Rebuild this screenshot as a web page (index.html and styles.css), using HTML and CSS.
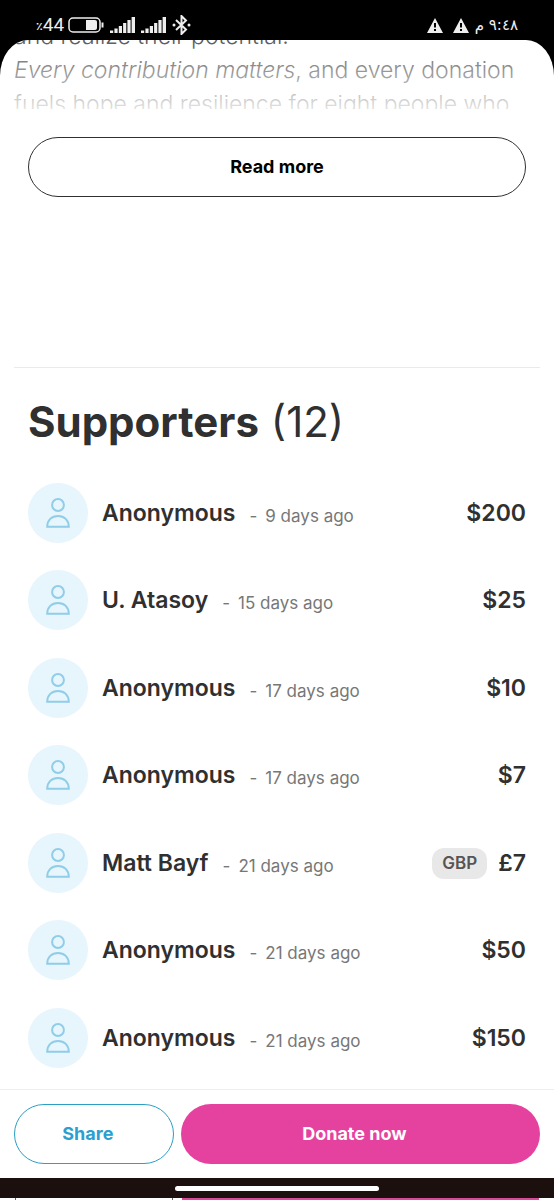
FILE: index.html
```html
<!DOCTYPE html>
<html lang="en">
<head>
<meta charset="utf-8">
<meta name="viewport" content="width=device-width, initial-scale=1">
<title>Supporters</title>
<link rel="stylesheet" href="styles.css">
</head>
<body>
<svg width="0" height="0" class="defs" aria-hidden="true">
  <symbol id="person" viewBox="0 0 24 30"><circle cx="12" cy="7" r="5.9"/><path d="M1.2 28.8C1.2 22 5.8 18 12 18s10.800 4 10.800 10.800z"/></symbol>
  <symbol id="bars" viewBox="0 0 25 16"><path d="M0 13.500h3.200V16H0zM4.400 11.500h3.200V16H4.400zM8.800 9H12v7H8.800zM13.100 6h3.200v10h-3.200zM17.400 3h3.200v13h-3.200zM21.600 0H25v16h-3.400z"/></symbol>
  <symbol id="warn" viewBox="0 0 16 15"><path fill-rule="evenodd" d="M8 0l8 15H0zM7 5v4.500h2V5zM7 11v2h2v-2z"/></symbol>
</svg>
<header class="status">
  <div class="status-side">
    <span class="percent">٪</span><span class="level">44</span>
    <svg class="battery" viewBox="0 0 36 16"><rect x="1" y="1" width="31" height="14" rx="4"/><path class="solid" d="M18 3h9q2 0 2 2v6q0 2-2 2h-9zM33.500 5.500h2v5h-2z"/></svg>
    <svg class="bars"><use href="#bars"/></svg>
    <svg class="bars"><use href="#bars"/></svg>
    <svg class="bluetooth" viewBox="0 0 19 20"><path d="M4 5l10 9.500L9.500 19V1L14 5.500 4 15"/><circle cx="2" cy="10" r="1.500"/><circle cx="17" cy="10" r="1.500"/></svg>
  </div>
  <div class="status-side">
    <svg class="warn"><use href="#warn"/></svg>
    <svg class="warn"><use href="#warn"/></svg>
    <span class="clock" dir="rtl" lang="ar">٩:٤٨ م</span>
  </div>
</header>
<main class="page">
  <div class="story">
    <p>and realize their potential.<br><em>Every contribution matters</em>, and every donation<br>fuels hope and resilience for eight people who</p>
  </div>
  <button class="read-more" type="button">Read more</button>
  <section class="supporters">
    <h2>Supporters <span>(12)</span></h2>
    <ul>
      <li><span class="avatar"><svg><use href="#person"/></svg></span><strong>Anonymous</strong><span class="dash">-</span><time>9 days ago</time><b>$200</b></li>
      <li><span class="avatar"><svg><use href="#person"/></svg></span><strong>U. Atasoy</strong><span class="dash">-</span><time>15 days ago</time><b>$25</b></li>
      <li><span class="avatar"><svg><use href="#person"/></svg></span><strong>Anonymous</strong><span class="dash">-</span><time>17 days ago</time><b>$10</b></li>
      <li><span class="avatar"><svg><use href="#person"/></svg></span><strong>Anonymous</strong><span class="dash">-</span><time>17 days ago</time><b>$7</b></li>
      <li><span class="avatar"><svg><use href="#person"/></svg></span><strong>Matt Bayf</strong><span class="dash">-</span><time>21 days ago</time><b><span class="currency">GBP</span>£7</b></li>
      <li><span class="avatar"><svg><use href="#person"/></svg></span><strong>Anonymous</strong><span class="dash">-</span><time>21 days ago</time><b>$50</b></li>
      <li><span class="avatar"><svg><use href="#person"/></svg></span><strong>Anonymous</strong><span class="dash">-</span><time>21 days ago</time><b>$150</b></li>
    </ul>
  </section>
</main>
<footer class="actions">
  <button class="share" type="button">Share</button>
  <button class="donate" type="button">Donate now</button>
</footer>
<div class="gesture"><span></span></div>
<div class="under"><span class="under-share"></span><span class="under-donate"></span></div>
</body>
</html>
```
FILE: styles.css
```css
* { box-sizing: border-box; }
body {
  margin: 0;
  background: #000;
  color: #303030;
  font-family: Inter, "Noto Sans", sans-serif;
}
button { font: 700 18px/24px Inter, sans-serif; cursor: pointer; }
.defs { position: absolute; }

.status {
  display: flex;
  justify-content: space-between;
  height: 40px;
  padding: 10px 36px 0;
  color: #eee;
  fill: #eee;
}
.status-side { display: flex; align-items: center; height: 30px; }
.percent { padding-top: 3px; font: 700 11px/16px "DejaVu Sans", sans-serif; }
.level { font: 400 19px/18px Roboto, sans-serif; }
.battery { width: 36px; height: 16px; margin-left: 4px; fill: none; stroke: #eee; stroke-width: 1.5; }
.battery .solid { fill: #eee; stroke: none; }
.bars { width: 25px; height: 16px; margin-left: 6px; }
.bluetooth { width: 19px; height: 20px; margin-left: 6px; fill: none; stroke: #eee; stroke-width: 2; }
.bluetooth circle { fill: #eee; stroke: none; }
.warn { width: 16px; height: 15px; margin-right: 10px; }
.clock { margin-left: -4px; font: 15px/18px "DejaVu Sans", sans-serif; }

.page {
  padding: 0 14px;
  background: #fff;
  border-radius: 28px 28px 0 0 / 36px 36px 0 0;
  overflow: hidden;
}
.story { position: relative; height: 69px; overflow: hidden; }
.story::after {
  content: "";
  position: absolute;
  inset: 0;
  background: linear-gradient(rgba(255, 255, 255, .2), rgba(255, 255, 255, .86));
}
.story p {
  margin: -21px 0 0;
  font-size: 23px;
  font-weight: 300;
  line-height: 34px;
  white-space: nowrap;
}
.read-more {
  display: block;
  width: calc(100% - 28px);
  height: 60px;
  margin: 28px 14px 170px;
  border: 1px solid #303030;
  border-radius: 30px;
  background: #fff;
  color: #000;
}
.supporters { padding: 29px 14px 21px; border-top: 1px solid #eaeaea; }
h2 { margin: 0; font-size: 42px; line-height: 50px; font-weight: 700; }
h2 span { margin-left: 2px; font-weight: 400; }
ul { margin: 36px 0 0; padding: 0; list-style: none; }
li { display: flex; align-items: center; height: 60px; margin-bottom: 27px; }
li:nth-child(even) { margin-bottom: 28px; }
li:last-child { margin-bottom: 0; }
.avatar {
  display: grid;
  place-items: center;
  width: 60px;
  height: 60px;
  margin-right: 14px;
  border-radius: 50%;
  background: #e7f5fc;
}
.avatar svg { width: 24px; height: 30px; fill: none; stroke: #8fcde8; stroke-width: 2; }
li strong { font-size: 23px; line-height: 28px; font-weight: 600; }
.dash, time { padding-top: 5px; color: #777; font-size: 17px; line-height: 24px; }
.dash { margin: 0 8px 0 14px; }
li b { display: flex; align-items: center; gap: 11px; margin-left: auto; font-size: 23px; line-height: 28px; font-weight: 600; }
.currency {
  padding: 3px 10px 4px;
  border-radius: 12px;
  background: #e8e8e8;
  color: #555;
  font-size: 17px;
  line-height: 24px;
}

.actions {
  display: grid;
  grid-template-columns: 4fr 9fr;
  gap: 7px;
  padding: 14px;
  border-top: 1px solid #f1ecee;
  background: #fff;
}
.share {
  height: 60px;
  padding: 0 12px 0 0;
  border: 1px solid #2b9fc4;
  border-radius: 30px;
  background: #fff;
  color: #2b9fcf;
}
.donate {
  height: 60px;
  padding: 0 12px 0 0;
  border: 0;
  border-radius: 30px;
  background: #e5429f;
  color: #fff;
}
.gesture { display: flex; justify-content: center; padding: 8px 0 7px; background: #1c100e; }
.gesture span { width: 37%; height: 5px; border-radius: 3px; background: #fff; }
.under { display: flex; gap: 9px; height: 2px; padding: 0 15px; background: #fff; }
.under-share { flex: 157; border: solid #666; border-width: 0 1px; }
.under-donate { flex: 358; background: #d94a98; }
```
